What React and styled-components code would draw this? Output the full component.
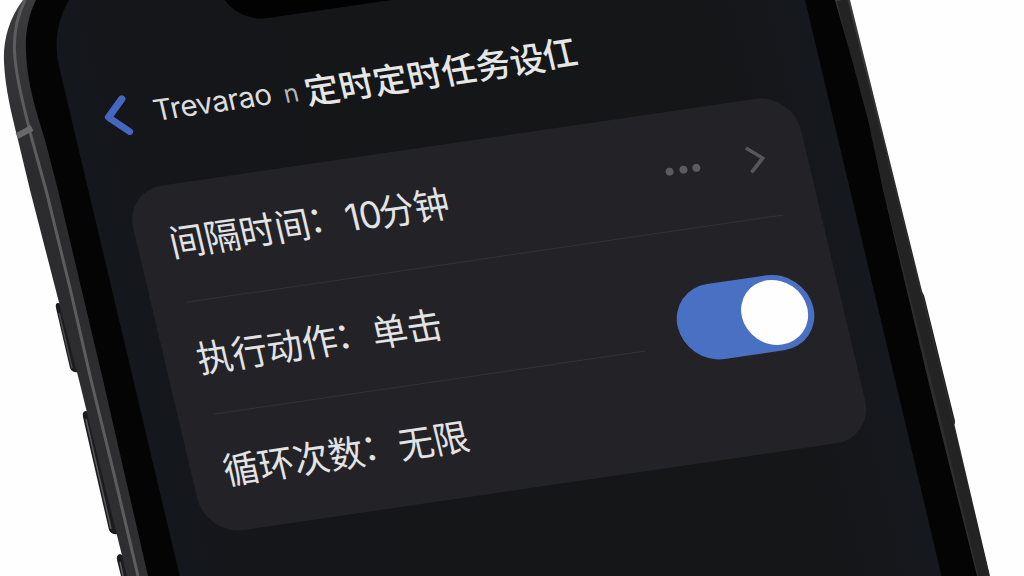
import React, { useState } from "react";
import styled, { createGlobalStyle } from "styled-components";

const GlobalStyle = createGlobalStyle`
  body {
    margin: 0;
    background: #fdfdfd;
  }
  * {
    box-sizing: border-box;
  }
`;

const Stage = styled.div`
  position: relative;
  width: 1024px;
  height: 576px;
  overflow: hidden;
  background: #fefefe;
  font-family: "Inter", "Noto Sans CJK SC", sans-serif;
`;

const Chassis = styled.svg`
  position: absolute;
  inset: 0;
`;

/* the screen lies tilted over the phone body */
const Screen = styled.div`
  position: absolute;
  top: 0;
  left: 0;
  width: 744px;
  height: 900px;
  padding: 0 34px 0 35px;
  border-radius: 96px 96px 0 0;
  background: linear-gradient(90deg, #14171c 0%, #151619 14%, #151618 85%, #15181d 100%);
  transform-origin: 0 0;
  transform: matrix(0.9895, -0.1447, 0.2305, 0.973, 37, -26.7);
`;

const Notch = styled.div`
  width: 400px;
  height: 78px;
  margin: 0 auto;
  border-radius: 0 0 42px 42px;
  background: #020203;
`;

const Header = styled.div`
  display: flex;
  align-items: center;
  height: 74px;
  margin-top: 39px;
  margin-bottom: 38px;
`;

const BackIcon = styled.svg`
  flex: none;
  width: 26px;
  height: 42px;
  margin-left: -3px;
  margin-right: 24px;
`;

const Title = styled.div`
  display: flex;
  align-items: center;
  white-space: nowrap;
  color: #e6e6e7;
`;

const AppName = styled.span`
  width: 131px;
  margin-bottom: 1px;
  font-size: 29.4px;
  letter-spacing: -0.5px;
  color: #dcdcde;
`;

const SmallLetter = styled.span`
  width: 21px;
  margin-top: 3px;
  font-size: 25px;
  color: #b4b4b7;
`;

const PageName = styled.span`
  font-family: "Noto Sans CJK SC", sans-serif;
  font-size: 34.6px;
  line-height: 50px;
  font-weight: 500;
`;

const LastChar = styled.span`
  margin-left: -1px;
  font-size: 34px;
  vertical-align: 2px;
`;

const Card = styled.div`
  height: 354px;
  padding: 0 37px 0 31px;
  border-radius: 38px;
  background: #232327;
`;

const Row = styled.div`
  display: flex;
  align-items: center;
  height: ${(p) => p.$height}px;
`;

const Divider = styled.div`
  width: ${(p) => p.$width}px;
  height: 1px;
  margin-left: 4px;
  background: #323236;
`;

const Label = styled.div`
  display: flex;
  flex: 1;
  align-items: baseline;
  padding-left: 1px;
  padding-bottom: 2px;
  font-family: "Noto Sans CJK SC", sans-serif;
  font-size: 35.4px;
  line-height: 50px;
  white-space: nowrap;
  color: #e3e3e5;
  transform: scaleY(1.05);
`;

const Colon = styled.span`
  align-self: flex-start;
  width: 34px;
  margin-left: -2px;
  margin-right: 3px;
  line-height: 44px;
`;

const Digits = styled.span`
  margin-left: 1px;
  margin-right: -2px;
  font-family: "Inter", sans-serif;
  font-size: 35.5px;
  letter-spacing: -0.5px;
`;

const Dots = styled.div`
  display: flex;
  gap: 5.4px;
  margin-right: 46px;
`;

const Dot = styled.span`
  width: 8px;
  height: 8px;
  border-radius: 50%;
  background: #5a5a5f;
`;

const MoreIcon = styled.svg`
  flex: none;
  width: 20px;
  height: 32px;
  margin-right: 4px;
`;

const Toggle = styled.button`
  display: flex;
  flex: none;
  align-items: center;
  justify-content: ${(p) => (p.$on ? "flex-end" : "flex-start")};
  width: 137px;
  height: 77px;
  margin-top: 76px;
  margin-right: -8px;
  padding: 0 6px;
  border: 0;
  border-radius: 39px;
  background: ${(p) => (p.$on ? "#4a70c4" : "#47474c")};
`;

const Knob = styled.span`
  width: 66px;
  height: 66px;
  border-radius: 50%;
  background: #fefefe;
`;

const PhoneBody = () => (
  <Chassis width="1024" height="576" viewBox="0 0 1024 576" fill="none">
    <defs>
      <linearGradient id="rail" x1="0" y1="0" x2="0" y2="1">
        <stop offset="0" stopColor="#3b3b3d" />
        <stop offset="0.3" stopColor="#2b2b2d" />
        <stop offset="1" stopColor="#2f2f31" />
      </linearGradient>
    </defs>
    {/* side buttons */}
    <path d="M62 304 58 303Q55 303 56 308L70 368Q72 373 78 372Z" fill="#1c1c1e" />
    <path d="M90 413 86 411Q82 411 83 417L109 530Q111 535 118 534Z" fill="#1c1c1e" />
    <path d="M124 556 120 554Q116 555 117 560L121 576H130Z" fill="#1c1c1e" />
    <path d="M917 291 922 292Q924 294 925 299L954 417Q956 423 954 425L950 424Z" fill="#1d1d1f" />
    {/* metal rail */}
    <path
      d="M23 0C8 20 3 42 4 62C5 88 12 116 18 140L30 190L79 380L127 576H990L944 380L897 190L850 0Z"
      fill="url(#rail)"
    />
    <path d="M842 0 889 190 937 380 984 576" stroke="#232324" strokeWidth="11" />
    {/* glass edge */}
    <path
      d="M36 0C28 16 25 34 26 52C27 84 37 114 45 140L58 190L103 380L148 576H977L928 380L883 190L868 120L852 60L835 0Z"
      fill="#040405"
    />
    {/* rail highlight and antenna band */}
    <path
      d="M25 0C16 18 13 38 15 58C17 84 25 110 31 136L46 190L70 288L91 380L114 474L138 576"
      stroke="#5d5d5f"
      strokeWidth="3"
    />
    <path d="M17 136 32 128" stroke="#69696b" strokeWidth="6" />
    <path d="M59 313 72 368" stroke="#48484a" strokeWidth="1.5" />
    <path d="M86 419 111 529" stroke="#59595b" strokeWidth="1.5" />
    <path d="M120 562 123 576" stroke="#59595b" strokeWidth="1.5" />
  </Chassis>
);

const App = () => {
  const [enabled, setEnabled] = useState(true);

  return (
    <Stage>
      <GlobalStyle />
      <PhoneBody />
      <Screen>
        <Notch />
        <Header>
          <BackIcon viewBox="0 0 26 42" fill="none">
            <path
              d="M21.8 4 4.5 20.5 21.8 37.5"
              stroke="#4468c2"
              strokeWidth="7"
              strokeLinecap="round"
              strokeLinejoin="round"
            />
          </BackIcon>
          <Title>
            <AppName>Trevarao</AppName>
            <SmallLetter>n</SmallLetter>
            <PageName>
              定时定时任务设<LastChar>仜</LastChar>
            </PageName>
          </Title>
        </Header>
        <Card>
          <Row $height={119}>
            <Label>
              间隔时间<Colon>：</Colon>
              <Digits>10</Digits>分钟
            </Label>
            <Dots>
              <Dot />
              <Dot />
              <Dot />
            </Dots>
            <MoreIcon viewBox="0 0 20 32" fill="none">
              <path d="M3 3.5 17 16 3 28.5" stroke="#56565b" strokeWidth="3.6" />
            </MoreIcon>
          </Row>
          <Divider $width={603} />
          <Row $height={114}>
            <Label>
              执行动作<Colon>：</Colon>单击
            </Label>
            <Toggle $on={enabled} onClick={() => setEnabled(!enabled)}>
              <Knob />
            </Toggle>
          </Row>
          <Divider $width={437} />
          <Row $height={114}>
            <Label>
              循环次数<Colon>：</Colon>无限
            </Label>
          </Row>
        </Card>
      </Screen>
    </Stage>
  );
};

export default App;
